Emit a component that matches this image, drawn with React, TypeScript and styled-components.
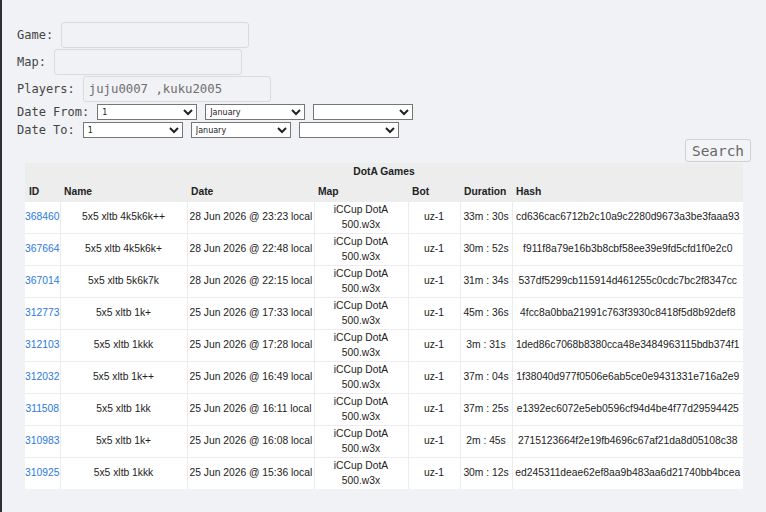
import React, { FC } from 'react'
import styled, { createGlobalStyle } from 'styled-components'

interface Game {
    id: string
    name: string
    date: string
    map: string
    bot: string
    duration: string
    hash: string
}

const games: Game[] = [
    { id: '368460', name: '5x5 xltb 4k5k6k++', date: '28 Jun 2026 @ 23:23 local', map: 'iCCup DotA 500.w3x', bot: 'uz-1', duration: '33m : 30s', hash: 'cd636cac6712b2c10a9c2280d9673a3be3faaa93' },
    { id: '367664', name: '5x5 xltb 4k5k6k+', date: '28 Jun 2026 @ 22:48 local', map: 'iCCup DotA 500.w3x', bot: 'uz-1', duration: '30m : 52s', hash: 'f911f8a79e16b3b8cbf58ee39e9fd5cfd1f0e2c0' },
    { id: '367014', name: '5x5 xltb 5k6k7k', date: '28 Jun 2026 @ 22:15 local', map: 'iCCup DotA 500.w3x', bot: 'uz-1', duration: '31m : 34s', hash: '537df5299cb115914d461255c0cdc7bc2f8347cc' },
    { id: '312773', name: '5x5 xltb 1k+', date: '25 Jun 2026 @ 17:33 local', map: 'iCCup DotA 500.w3x', bot: 'uz-1', duration: '45m : 36s', hash: '4fcc8a0bba21991c763f3930c8418f5d8b92def8' },
    { id: '312103', name: '5x5 xltb 1kkk', date: '25 Jun 2026 @ 17:28 local', map: 'iCCup DotA 500.w3x', bot: 'uz-1', duration: '3m : 31s', hash: '1ded86c7068b8380cca48e3484963115bdb374f1' },
    { id: '312032', name: '5x5 xltb 1k++', date: '25 Jun 2026 @ 16:49 local', map: 'iCCup DotA 500.w3x', bot: 'uz-1', duration: '37m : 04s', hash: '1f38040d977f0506e6ab5ce0e9431331e716a2e9' },
    { id: '311508', name: '5x5 xltb 1kk', date: '25 Jun 2026 @ 16:11 local', map: 'iCCup DotA 500.w3x', bot: 'uz-1', duration: '37m : 25s', hash: 'e1392ec6072e5eb0596cf94d4be4f77d29594425' },
    { id: '310983', name: '5x5 xltb 1k+', date: '25 Jun 2026 @ 16:08 local', map: 'iCCup DotA 500.w3x', bot: 'uz-1', duration: '2m : 45s', hash: '2715123664f2e19fb4696c67af21da8d05108c38' },
    { id: '310925', name: '5x5 xltb 1kkk', date: '25 Jun 2026 @ 15:36 local', map: 'iCCup DotA 500.w3x', bot: 'uz-1', duration: '30m : 12s', hash: 'ed245311deae62ef8aa9b483aa6d21740bb4bcea' },
]

const columns = [
    { title: 'ID', width: 35 },
    { title: 'Name', width: 127 },
    { title: 'Date', width: 127 },
    { title: 'Map', width: 94 },
    { title: 'Bot', width: 52 },
    { title: 'Duration', width: 52 },
    { title: 'Hash', width: 231 },
]

const months = ['January', 'February', 'March', 'April', 'May', 'June']

const GlobalStyle = createGlobalStyle`
    html, body {
        margin: 0;
        background: #f1f2f6;
    }
    body {
        border-left: 2px solid #2f2f2f;
        min-height: 512px;
        box-sizing: border-box;
    }
`

const Page = styled.div`
    padding: 22px 15px 0 14px;
`

const Form = styled.form`
    display: flex;
    flex-direction: column;
`

const FieldRow = styled.div<{ $top?: number }>`
    display: flex;
    align-items: center;
    gap: 8px;
    margin-top: ${p => p.$top ?? 0}px;
`

const Label = styled.label`
    font-family: 'DejaVu Sans Mono', monospace;
    font-size: 12px;
    color: #444;
    line-height: 14px;
    padding-left: 1px;
`

const TextInput = styled.input`
    width: 188px;
    height: 26px;
    box-sizing: border-box;
    border: 1px solid #d9d9de;
    border-radius: 3px;
    background: #f1f2f6;
    padding: 0 5px;
    font-family: 'DejaVu Sans Mono', monospace;
    font-size: 12.3px;
    color: #666;
    outline: none;

    &::placeholder {
        color: #6e6e6e;
    }
`

const Select = styled.select`
    width: 100px;
    height: 16px;
    font-family: 'DejaVu Sans', sans-serif;
    font-size: 8px;
    background: #fff;
    color: #222;
`

const SearchRow = styled.div`
    display: flex;
    justify-content: flex-end;
    margin-top: 1px;
`

const SearchButton = styled.button`
    width: 66px;
    height: 23px;
    padding: 0;
    border: 1px solid #d0d0d4;
    border-radius: 3px;
    background: #f3f4f7;
    font-family: 'DejaVu Sans Mono', monospace;
    font-size: 14.4px;
    color: #666;
`

const Table = styled.table`
    margin: 1px 8px 0 9px;
    width: 718px;
    table-layout: fixed;
    border-collapse: collapse;
    font-family: 'Liberation Sans', Arial, sans-serif;
    font-size: 10.3px;
    color: #222;
`

const Caption = styled.caption`
    background: #ededed;
    font-weight: bold;
    height: 18px;
    line-height: 18px;
`

const HeadCell = styled.th`
    background: #ededed;
    text-align: left;
    padding: 0 4px;
    height: 21px;
    white-space: nowrap;
    font-weight: bold;
`

const Row = styled.tr`
    background: #fff;
    & + & {
        border-top: 1px solid #ececec;
    }
`

const Cell = styled.td<{ $tight?: boolean }>`
    text-align: center;
    vertical-align: middle;
    line-height: 14.4px;
    height: 29px;
    padding: 1px ${p => (p.$tight ? 0 : 2)}px;
    white-space: nowrap;
    & + & {
        border-left: 1px solid #ececec;
    }
`

const MapCell = styled(Cell)`
    white-space: normal;
`

const GameLink = styled.a`
    color: #2a78de;
    text-decoration: none;
`

const DateSelects: FC = () => (
    <>
        <Select defaultValue="1">
            {Array.from({ length: 31 }, (_, i) => (
                <option key={i}>{i + 1}</option>
            ))}
        </Select>
        <Select defaultValue="January">
            {months.map(m => (
                <option key={m}>{m}</option>
            ))}
        </Select>
        <Select defaultValue="">
            <option value=""></option>
            <option>2026</option>
        </Select>
    </>
)

const App: FC = () => {
    return (
        <>
            <GlobalStyle />
            <Page>
                <Form>
                    <FieldRow>
                        <Label>Game:</Label>
                        <TextInput />
                    </FieldRow>
                    <FieldRow $top={1}>
                        <Label>Map:</Label>
                        <TextInput />
                    </FieldRow>
                    <FieldRow $top={1}>
                        <Label>Players:</Label>
                        <TextInput placeholder="juju0007 ,kuku2005" />
                    </FieldRow>
                    <FieldRow $top={2}>
                        <Label>Date From:</Label>
                        <DateSelects />
                    </FieldRow>
                    <FieldRow $top={2}>
                        <Label>Date To:</Label>
                        <DateSelects />
                    </FieldRow>
                    <SearchRow>
                        <SearchButton type="button">Search</SearchButton>
                    </SearchRow>
                </Form>
                <Table>
                    <Caption>DotA Games</Caption>
                    <colgroup>
                        {columns.map(c => (
                            <col key={c.title} style={{ width: c.width }} />
                        ))}
                    </colgroup>
                    <thead>
                        <tr>
                            {columns.map(c => (
                                <HeadCell key={c.title}>{c.title}</HeadCell>
                            ))}
                        </tr>
                    </thead>
                    <tbody>
                        {games.map(g => (
                            <Row key={g.id}>
                                <Cell $tight>
                                    <GameLink href="#">{g.id}</GameLink>
                                </Cell>
                                <Cell>{g.name}</Cell>
                                <Cell>{g.date}</Cell>
                                <MapCell>{g.map}</MapCell>
                                <Cell>{g.bot}</Cell>
                                <Cell>{g.duration}</Cell>
                                <Cell>{g.hash}</Cell>
                            </Row>
                        ))}
                    </tbody>
                </Table>
            </Page>
        </>
    )
}

export default App
